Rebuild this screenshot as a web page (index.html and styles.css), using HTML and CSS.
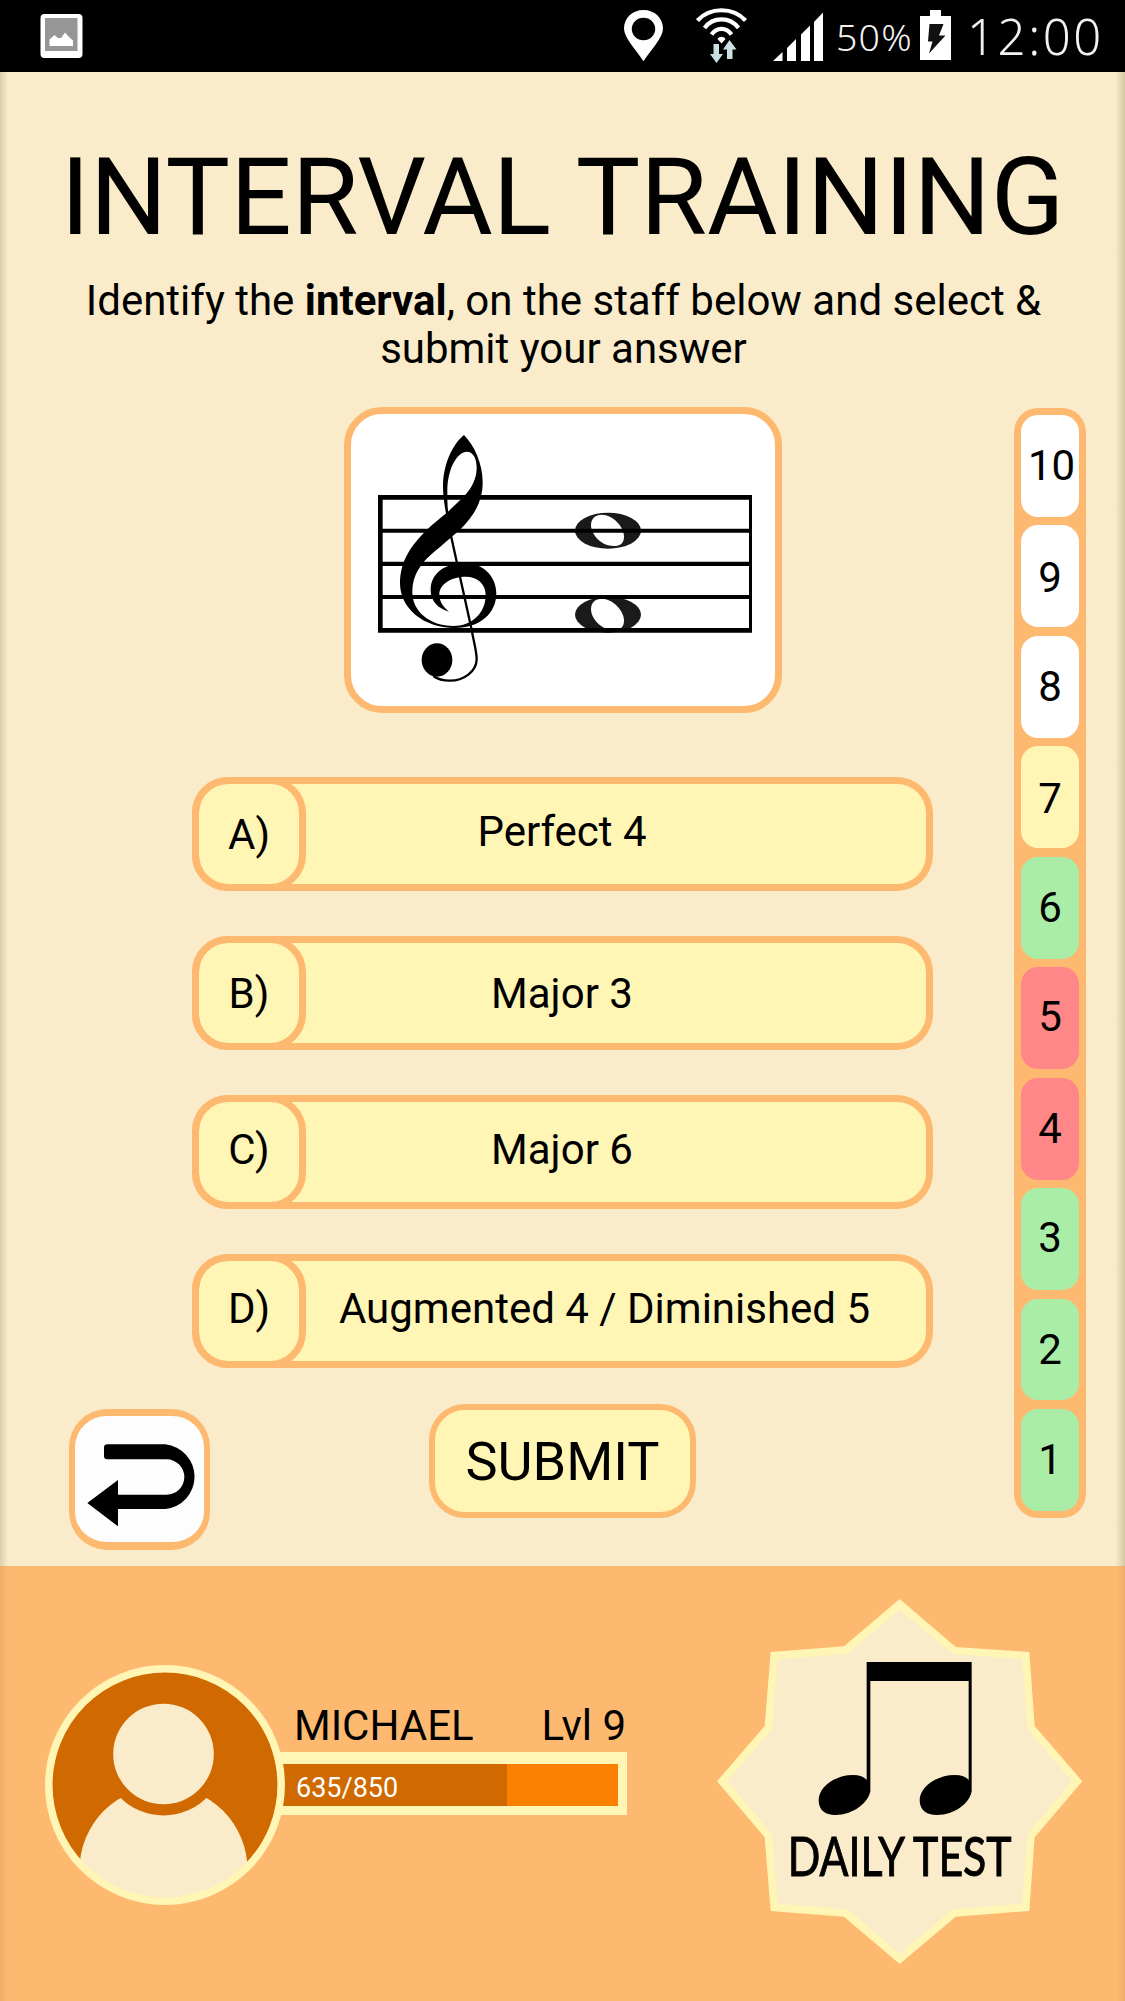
FILE: index.html
```html
<!DOCTYPE html>
<html lang="en">
<head>
<meta charset="utf-8">
<title>Interval Training</title>
<link rel="stylesheet" href="styles.css">
</head>
<body>
<header class="status">
  <svg class="photo" width="43" height="44" viewBox="0 0 43 44">
    <rect x=".5" width="42" height="44" rx="4" fill="#fff"/>
    <path d="M5 4h32.500v33H5z" fill="#969696"/>
    <path d="M9.500 32v-6.500l5-4.500 3.500 3h3l4-5.500 4.500 5 3.500 3V32z" fill="#fff"/>
  </svg>
  <svg class="pin" width="40" height="52" viewBox="0 0 40 52">
    <path fill="#fff" fill-rule="evenodd" d="M19.500 0C8.500 0 0 8 0 18.500c0 9 11 20 19.500 32.800C28 38.500 39 27.500 39 18.500 39 8 30.500 0 19.500 0zm0 7.700a11.700 11.300 0 1 1 0 22.600 11.700 11.300 0 0 1 0-22.600z"/>
  </svg>
  <svg class="wifi" width="52" height="56" viewBox="0 0 52 56">
    <g fill="none" stroke="#fff" stroke-width="4.200">
      <path d="M1.500 12.500C14-1.200 37-1.200 49.500 12.500"/>
      <path d="M8.500 20C17 8.500 34 8.500 42.500 20"/>
      <path d="M15.500 26.500c5-7.500 15-7.500 20 0"/>
    </g>
    <path d="M21.500 31c2-3 6-3 8 0l-4 4.500z" fill="#fff"/>
    <path d="M17.500 36h5.500v10h4l-6.500 9-6.500-9h3.500zM33.500 32l7 9.500h-4V51H31v-9.500h-4z" fill="#c9e0e4"/>
  </svg>
  <svg class="signal" width="51" height="50" viewBox="0 0 51 50">
    <path fill="#fff" d="M0 49l9.500-9v9zM14 49V36l9-9v22zM28 49V22.500l9-9V49zM41 49V10l9-9.500V49z"/>
  </svg>
  <span class="percent">50%</span>
  <svg class="battery" width="31" height="50" viewBox="0 0 31 50">
    <path fill="#fff" d="M10 0h11v6h10v44H0V6h10z"/>
    <path fill="#111" d="M9.500 14H23.500l-4.500 11.500h6.500L9 43.500l3.500-12H8z"/>
  </svg>
  <span class="clock">12:00</span>
</header>

<main class="lesson">
  <h1 class="title">INTERVAL TRAINING</h1>
  <p class="intro">Identify the <b>interval</b>, on the staff below and select &amp;<br>submit your answer</p>
  <div class="board">
    <div class="play">
      <div class="staff">
        <svg width="423" height="291" viewBox="63 57 1269 873">
          <g fill="#1a1a1a">
            <ellipse cx="834" cy="407" rx="99" ry="54"/>
            <ellipse cx="834" cy="659" rx="99" ry="54"/>
          </g>
          <g fill="#fff">
            <path d="M783 390c0-20 13-31 33-31 31 0 66 35 66 66 0 18-10 28-31 28-36 0-68-33-68-63z"/>
            <path d="M783 642c0-20 13-31 33-31 31 0 66 35 66 66 0 18-10 28-31 28-36 0-68-33-68-63z"/>
          </g>
          <path d="M144 300h1122v14H144zM144 401h1122v12H144zM144 500h1122v13H144zM144 600h1122v12H144zM144 699h1122v14H144zM144 300h14v413h-14zM1257 300h9v413h-9z"/>
          <path d="M402 120C432 150 458 205 458 262C458 320 432 362 392 402L364 427C330 457 305 475 283 499C258 530 247 555 247 592C247 650 300 693 370 693C425 693 467 655 467 600C467 565 440 545 408 545C365 545 328 567 328 598C328 622 342 638 357 650C325 640 302 620 302 585C302 535 345 504 405 504C460 504 499 545 499 595C499 655 450 699 375 699C280 699 210 640 210 565C210 500 242 452 290 405C315 381 335 366 354 350L400 306C425 282 440 250 440 220C440 190 430 170 410 170C385 170 352 215 352 290C352 312 352 332 355 354L348 356C342 320 339 300 339 270C340 205 370 145 402 120Z"/>
          <path d="M363 422C378 490 404 610 423 695C432 745 440 768 440 792C440 830 400 857 360 857C338 857 322 852 310 843" fill="none" stroke="#000" stroke-width="7"/>
          <ellipse cx="321" cy="795" rx="46" ry="50"/>
        </svg>
      </div>
      <ul class="answers">
        <li class="answer"><span class="key low">A)</span><span class="name">Perfect 4</span></li>
        <li class="answer"><span class="key low">B)</span><span class="name low">Major 3</span></li>
        <li class="answer"><span class="key">C)</span><span class="name">Major 6</span></li>
        <li class="answer"><span class="key">D)</span><span class="name wide">Augmented 4 / Diminished 5</span></li>
      </ul>
      <div class="actions">
        <button class="back" aria-label="Back">
          <svg width="129" height="126" viewBox="0 0 387 378">
            <path d="M97 85H271A97.500 97.500 0 0 1 271 279H129V331L37 261L129 192V236H275A53 53 0 0 0 275 130H97Q87 130 87 120V95Q87 85 97 85Z"/>
          </svg>
        </button>
        <button class="submit">SUBMIT</button>
      </div>
    </div>
    <ol class="progress">
      <li class="step ten">10</li>
      <li class="step down">9</li>
      <li class="step">8</li>
      <li class="step current down">7</li>
      <li class="step right">6</li>
      <li class="step wrong up">5</li>
      <li class="step wrong">4</li>
      <li class="step right up">3</li>
      <li class="step right">2</li>
      <li class="step right">1</li>
    </ol>
  </div>
</main>

<footer class="profile">
  <svg class="avatar" width="240" height="240" viewBox="0 0 240 240">
    <defs><clipPath id="face"><circle cx="120" cy="120" r="113"/></clipPath></defs>
    <circle cx="120" cy="120" r="113" fill="#d06a00"/>
    <g clip-path="url(#face)">
      <circle cx="118.500" cy="205" r="84" fill="#faecca"/>
      <circle cx="118.500" cy="89.500" r="61" fill="#d06a00"/>
      <circle cx="118.500" cy="89" r="50.300" fill="#faecca"/>
    </g>
    <circle cx="120" cy="120" r="116.200" fill="none" stroke="#fff5b4" stroke-width="7.500"/>
  </svg>
  <div class="player">
    <div class="who"><span class="nick">MICHAEL</span><span class="level">Lvl 9</span></div>
    <div class="bar"><div class="track"><div class="fill" style="width: 66.900%">635/850</div></div></div>
  </div>
  <svg class="daily" width="366" height="366" viewBox="52 57 1098 1098">
    <path fill="#fff5b4" d="M600 57L768 201L989 216L1005 438L1148 604L1005 772L989 993L768 1010L600 1152L433 1010L213 993L195 772L52 604L195 438L213 216L433 199Z"/>
    <path fill="#faecca" d="M600 88L760 221L967 238L984 446L1117 604L984 763L967 971L760 988L600 1122L443 988L233 971L217 763L83 604L217 446L233 238L443 221Z"/>
    <path d="M501 246H816V634C810 670 765 705 712 705C680 705 660 690 660 660C660 622 710 585 765 585Q795 585 807 600V303H512V634C505 670 460 705 407 705C376 705 357 690 357 660C357 622 405 585 460 585Q489 585 501 600Z"/>
    <text class="daily-text" x="264" y="888" textLength="672" lengthAdjust="spacingAndGlyphs">DAILY TEST</text>
  </svg>
</footer>
</body>
</html>
```
FILE: styles.css
```css
* { box-sizing: border-box; }

body {
  margin: 0;
  width: 1125px;
  background: #faecca;
  color: #000;
  font-family: Roboto, "Liberation Sans", sans-serif;
  font-size: 42px;
}

svg { display: block; flex: none; }
ul, ol { margin: 0; padding: 0; list-style: none; }
button { padding: 0; font: inherit; color: inherit; }

.status {
  display: flex;
  align-items: flex-start;
  height: 72px;
  padding-left: 40px;
  background: #000;
  color: #f2f2f2;
  font-family: "Noto Sans", "Open Sans", sans-serif;
  font-weight: 300;
  white-space: nowrap;
}
.photo { margin-top: 14px; }
.pin { margin: 10px 0 0 541px; }
.wifi { margin: 8px 0 0 32px; }
.signal { margin: 12px 0 0 25px; }
.percent {
  width: 81px;
  margin: 10px 0 0 12px;
  font-size: 37.500px;
  letter-spacing: 1.200px;
  line-height: 54px;
}
.battery { margin: 10px 0 0 3px; }
.clock {
  margin: 9px 0 0 16px;
  font-size: 49px;
  letter-spacing: 2.600px;
  line-height: 54px;
}

.lesson {
  height: 1494px;
  background: linear-gradient(90deg, rgba(60, 50, 0, .16), transparent 8px, transparent 1115px, rgba(60, 50, 0, .2));
}
.title {
  margin: 0;
  padding-top: 61px;
  font-size: 108.200px;
  font-weight: 400;
  line-height: 128px;
  text-align: center;
}
.intro {
  margin: 0;
  padding: 16px 0 0 2px;
  line-height: 48px;
  text-align: center;
}
.board { display: flex; margin-top: 33.500px; }
.play { width: 1014px; }
.staff {
  width: 438px;
  height: 306px;
  margin-left: 343.500px;
  border: 7.500px solid #feb971;
  border-radius: 38px;
  background: #fff;
  overflow: hidden;
}
.answers {
  display: flex;
  flex-direction: column;
  gap: 45px;
  width: 741px;
  margin: 64.500px 0 0 192px;
}
.answer {
  display: flex;
  height: 114px;
  border-radius: 36px;
  background: #fff5b4;
  box-shadow: inset 0 0 0 7px #feb971;
  line-height: 110px;
}
.key {
  width: 114px;
  height: 114px;
  border: 7px solid #feb971;
  border-radius: 36px;
  line-height: 96px;
  text-align: center;
}
.key.low { line-height: 102px; }
.name { flex: 1; padding-right: 115px; text-align: center; }
.name.low { line-height: 115px; }
.name.wide { padding-right: 30px; }

.actions { display: flex; margin-top: 36px; padding-left: 69px; }
.back {
  width: 141px;
  height: 141px;
  margin-top: 5px;
  border: solid #feb971;
  border-width: 7px 6px 8px;
  border-radius: 38px;
  background: #fdfdfd;
}
.submit {
  width: 267px;
  height: 114px;
  margin-left: 219px;
  border: 6px solid #feb971;
  border-radius: 36px;
  background: #fff5b4;
  font-size: 54px;
}

.progress {
  display: flex;
  flex-direction: column;
  gap: 8.600px;
  width: 72px;
  height: 1110px;
  margin-top: 1.500px;
  padding: 7px;
  border-radius: 24px;
  background: #feb971;
}
.step {
  flex: none;
  height: 101.860px;
  border-radius: 17px;
  background: #fff;
  line-height: 102px;
  text-align: center;
}
.ten { padding-left: 3px; }
.down { line-height: 105px; }
.up { line-height: 99px; }
.current { background: #fff5b4; }
.right { background: #a9eda7; }
.wrong { background: #ff8787; }

.profile {
  display: flex;
  align-items: flex-start;
  height: 435px;
  padding-left: 45px;
  background: linear-gradient(90deg, rgba(60, 30, 0, .08), transparent 8px, transparent 1117px, rgba(60, 30, 0, .08)), #feb971;
}
.avatar { position: relative; z-index: 1; margin-top: 99px; }
.player { width: 362px; margin: 133px 0 0 -20px; }
.who {
  display: flex;
  justify-content: space-between;
  height: 53px;
  padding: 0 1px 0 29px;
  line-height: 54px;
}
.bar {
  height: 63px;
  padding: 12px 9px 9px 18px;
  background: #fff5b4;
}
.track { height: 42px; background: #fb8000; }
.fill {
  height: 42px;
  padding-left: 13px;
  background: #d06a00;
  color: #fff;
  font-size: 27px;
  line-height: 48px;
}
.daily { margin: 33px 0 0 90px; }
.daily-text {
  font-family: Lato, sans-serif;
  font-size: 164px;
  stroke: #000;
  stroke-width: 3px;
}
```
